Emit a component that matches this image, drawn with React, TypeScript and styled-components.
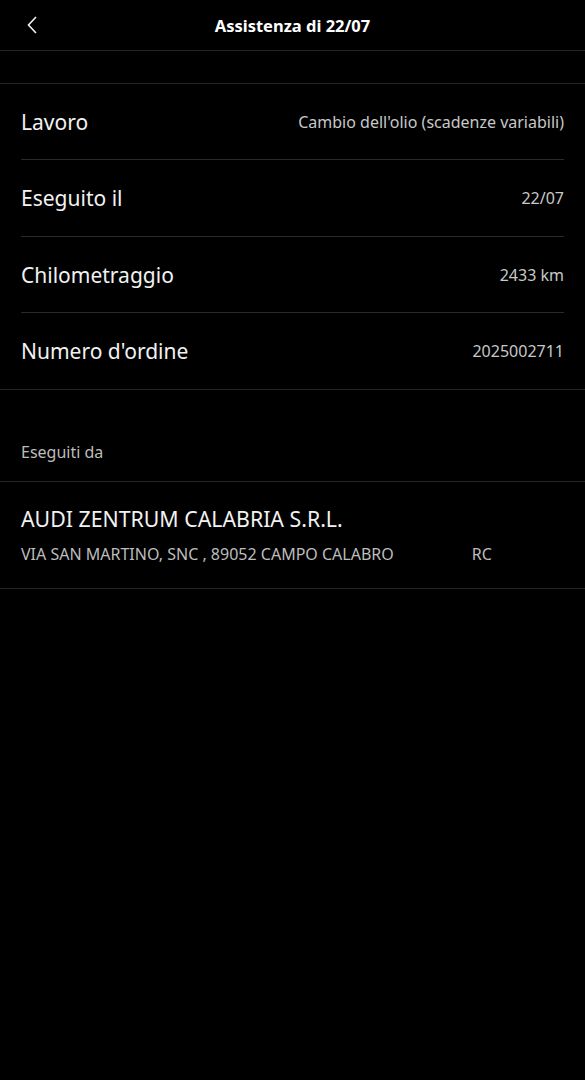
import React from 'react';
import styled, { createGlobalStyle } from 'styled-components';

const GlobalStyle = createGlobalStyle`
  html, body {
    margin: 0;
    padding: 0;
    background: #000;
  }
  body {
    font-family: "Noto Sans", "Open Sans", sans-serif;
    color: #f2f2f2;
  }
`;

const details = [
  { label: 'Lavoro', value: "Cambio dell'olio (scadenze variabili)" },
  { label: 'Eseguito il', value: '22/07' },
  { label: 'Chilometraggio', value: '2433 km' },
  { label: "Numero d'ordine", value: '2025002711' },
];

const App: React.FC = () => {
  return (
    <Page>
      <GlobalStyle />
      <Header>
        <BackButton aria-label="Indietro">
          <svg width="12" height="18" viewBox="0 0 12 18" fill="none">
            <path d="M10 1 L2.5 9 L10 17" stroke="#f2f2f2" strokeWidth="1.6" />
          </svg>
        </BackButton>
        <Title>Assistenza di 22/07</Title>
      </Header>
      <Spacer />
      <DetailList>
        {details.map((d, i) => (
          <DetailRow key={d.label} last={i === details.length - 1}>
            <Label>{d.label}</Label>
            <Value>{d.value}</Value>
          </DetailRow>
        ))}
      </DetailList>
      <SectionLabel>Eseguiti da</SectionLabel>
      <Dealer>
        <DealerName>AUDI ZENTRUM CALABRIA S.R.L.</DealerName>
        <Address>
          <span>VIA SAN MARTINO, SNC , 89052 CAMPO CALABRO</span>
          <span>RC</span>
        </Address>
      </Dealer>
    </Page>
  );
};

const Page = styled.div`
  min-height: 1080px;
  background: #000;
`;

const Header = styled.header`
  position: relative;
  height: 50px;
  display: flex;
  align-items: center;
  justify-content: center;
  border-bottom: 1px solid #262626;
`;

const BackButton = styled.button`
  position: absolute;
  left: 26px;
  top: 16px;
  padding: 0;
  border: none;
  background: none;
  display: flex;
`;

const Title = styled.h1`
  margin: 0;
  font-size: 16.5px;
  font-weight: 700;
  color: #fff;
`;

const Spacer = styled.div`
  height: 32px;
  border-bottom: 1px solid #262626;
`;

const DetailList = styled.div`
  border-bottom: 1px solid #262626;
`;

const DetailRow = styled.div<{ last?: boolean }>`
  height: 76px;
  margin: 0 21px;
  display: flex;
  align-items: center;
  justify-content: space-between;
  border-bottom: ${(p) => (p.last ? 'none' : '1px solid #2a2a2a')};
  box-sizing: border-box;
  &:nth-child(2) {
    height: 77px;
  }
`;

const Label = styled.span`
  font-size: 21px;
  color: #f2f2f2;
`;

const Value = styled.span`
  font-size: 16px;
  color: #c8c8c8;
`;

const SectionLabel = styled.div`
  padding: 51px 21px 18px;
  font-size: 16px;
  line-height: 22px;
  color: #bdbdbd;
  border-bottom: 1px solid #262626;
`;

const Dealer = styled.div`
  padding: 24px 21px 23px;
  border-bottom: 1px solid #262626;
  display: flex;
  flex-direction: column;
  gap: 11px;
`;

const DealerName = styled.div`
  font-size: 21.3px;
  line-height: 26px;
  color: #f2f2f2;
`;

const Address = styled.div`
  display: flex;
  gap: 78px;
  font-size: 16px;
  line-height: 22px;
  color: #bdbdbd;
`;

export default App;
